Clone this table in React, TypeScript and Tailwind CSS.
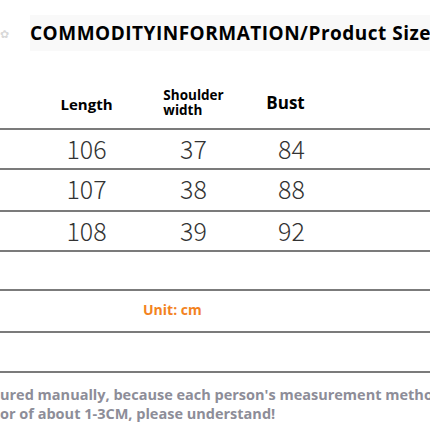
import React from 'react';

const rows = [
  ['106', '37', '84'],
  ['107', '38', '88'],
  ['108', '39', '92'],
];

const line = 'border-t-2 border-[#7b7b7b]';

const App: React.FC = () => {
  return (
    <div className="w-[430px] h-[430px] overflow-hidden bg-white font-['Open_Sans',sans-serif]">
      {/* title */}
      <div className="h-[80px] flex items-start pt-[15px]">
        <div className="w-[30px] h-[36px] flex items-center">
          <span className="text-[11px] text-[#d8d8d8] leading-none">✿</span>
        </div>
        <div className="h-[36px] flex-1 bg-[#f9f9f9] flex items-center whitespace-nowrap overflow-hidden">
          <span className="text-[19px] font-bold text-black tracking-[0.5px]">
            COMMODITYINFORMATION/Product Size
          </span>
        </div>
      </div>

      {/* header */}
      <div className="grid grid-cols-[33px_107px_107px_87px_1fr] h-[48px] items-center">
        <div />
        <div className="text-center text-[15px] font-bold text-black">Length</div>
        <div className="flex justify-center">
          <div className="text-[13.5px] font-bold text-black leading-[15px] pb-[2px]">
            Shoulder
            <br />
            width
          </div>
        </div>
        <div className="text-center text-[17px] font-bold text-black -mt-[2px] pr-[10px]">Bust</div>
        <div />
      </div>

      {rows.map((r, i) => (
        <div
          key={i}
          className={`${line} grid grid-cols-[33px_107px_107px_87px_1fr] ${i === 1 ? 'h-[42px]' : 'h-[40px]'} items-center pb-[3px]`}
        >
          <div />
          {r.map((v, j) => (
            <div
              key={j}
              className={`text-center text-[25px] font-light text-[#333] font-['Noto_Sans_CJK_SC','Noto_Sans',sans-serif] ${j === 2 ? 'pl-[2px]' : ''}`}
            >
              {v}
            </div>
          ))}
          <div />
        </div>
      ))}

      <div className={`${line} h-[39px]`} />
      <div className={`${line} h-[42px] flex items-center pl-[143px] pb-[4px]`}>
        <span className="text-[14px] font-bold text-[#f3831f]">Unit: cm</span>
      </div>
      <div className={`${line} h-[40px]`} />
      <div className={`${line} pt-[12px] whitespace-nowrap text-[14.5px] font-bold text-[#8d8d98] leading-[19px]`}>
        <div>ured manually, because each person's measurement method</div>
        <div>or of about 1-3CM, please understand!</div>
      </div>
    </div>
  );
};

export default App;
